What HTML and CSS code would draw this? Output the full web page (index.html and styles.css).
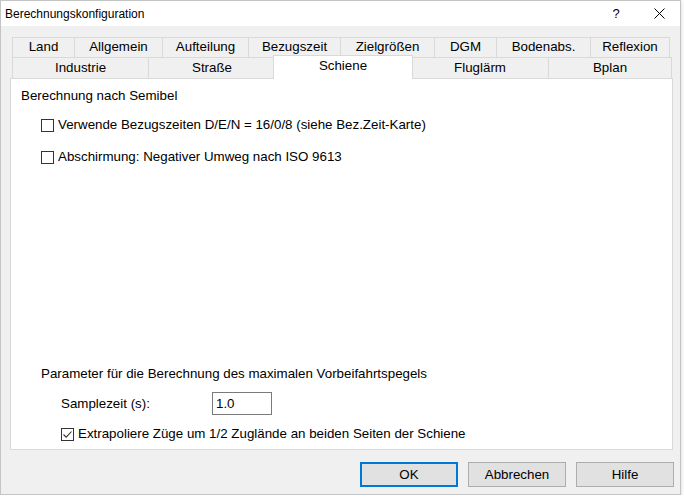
FILE: index.html
```html
<!DOCTYPE html>
<html>
<head>
  <title>Berechnungskonfiguration</title>
  <link rel="stylesheet" href="styles.css">
</head>
<body>
  <div class="dialog">
    <div class="titlebar">
      <span class="title">Berechnungskonfiguration</span>
      <span class="caption-btn help">?</span>
      <span class="caption-btn close">
        <svg width="11" height="11" viewBox="0 0 11 11"><path d="M0.5 0.5L10.5 10.5M10.5 0.5L0.5 10.5" stroke="#000" stroke-width="1" fill="none"/></svg>
      </span>
    </div>

    <div class="main">
      <!-- back row of tabs -->
      <div class="tab-row back">
        <div class="tab" style="width:62px">Land</div>
        <div class="tab" style="width:88px">Allgemein</div>
        <div class="tab" style="width:86px">Aufteilung</div>
        <div class="tab" style="width:92px">Bezugszeit</div>
        <div class="tab" style="width:94px">Zielgrößen</div>
        <div class="tab" style="width:62px">DGM</div>
        <div class="tab" style="width:94px">Bodenabs.</div>
        <div class="tab last" style="width:80px">Reflexion</div>
      </div>
      <!-- front row, holds the active tab -->
      <div class="tab-row front">
        <div class="tab" style="width:136px">Industrie</div>
        <div class="tab" style="width:127px">Straße</div>
        <div class="tab active" style="width:136px">Schiene</div>
        <div class="tab" style="width:137px">Fluglärm</div>
        <div class="tab last" style="width:124px">Bplan</div>
      </div>

      <div class="panel">
        <div class="group-title">Berechnung nach Semibel</div>
        <div class="options">
          <label class="check-row">
            <span class="checkbox"></span>
            <span>Verwende Bezugszeiten D/E/N = 16/0/8 (siehe Bez.Zeit-Karte)</span>
          </label>
          <label class="check-row">
            <span class="checkbox"></span>
            <span>Abschirmung: Negativer Umweg nach ISO 9613</span>
          </label>
        </div>

        <div class="params">
          <div class="params-title">Parameter für die Berechnung des maximalen Vorbeifahrtspegels</div>
          <div class="field-row">
            <span class="field-label">Samplezeit (s):</span>
            <input class="field-input" type="text" value="1.0">
          </div>
          <label class="check-row">
            <span class="checkbox checked">
              <svg width="11" height="11" viewBox="0 0 11 11"><path d="M1.5 5.5L4.2 8.2L9.5 2.5" stroke="#333" stroke-width="1.1" fill="none"/></svg>
            </span>
            <span>Extrapoliere Züge um 1/2 Zuglände an beiden Seiten der Schiene</span>
          </label>
        </div>
      </div>

      <div class="buttons">
        <button class="btn default">OK</button>
        <button class="btn">Abbrechen</button>
        <button class="btn">Hilfe</button>
      </div>
    </div>
  </div>
</body>
</html>
```

FILE: styles.css
```css
:root {
  --face: #f0f0f0;
  --tab-border: #d9d9d9;
  --text: #000000;
  --accent: #0078d7;
}

body {
  margin: 0;
  background: #ffffff;
  font-family: "Liberation Sans", Arial, sans-serif;
  font-size: 13.33px;
  color: var(--text);
}

.dialog {
  width: 681px;
  height: 495px;
  box-sizing: border-box;
  border: 1px solid #c4c4c4;
  background: var(--face);
  display: flex;
  flex-direction: column;
  box-shadow: 1px 1px 3px rgba(0, 0, 0, 0.12);
}

/* Title bar */
.titlebar {
  height: 25px;
  background: #ffffff;
  display: flex;
  align-items: center;
  padding-left: 4px;
  font-size: 12px;
}

.title {
  flex: 1;
}

.caption-btn {
  height: 25px;
  display: flex;
  align-items: center;
  justify-content: center;
}

.help {
  width: 44px;
  font-size: 13px;
}

.close {
  width: 42px;
}

/* Tabs */
.main {
  flex: 1;
  padding: 11px 6px 0 9px;
  display: flex;
  flex-direction: column;
}

.tab-row {
  display: flex;
  margin-left: 2px;
}

.tab {
  box-sizing: border-box;
  border-top: 1px solid var(--tab-border);
  border-left: 1px solid var(--tab-border);
  background: var(--face);
  text-align: center;
  line-height: 16px;
  white-space: nowrap;
}

.tab.last {
  border-right: 1px solid var(--tab-border);
}

.back .tab {
  height: 20px;
  padding-top: 1px;
}

.front {
  height: 21px;
}

.front .tab {
  height: 21px;
  padding-top: 2px;
}

.front .tab.active {
  position: relative;
  z-index: 1;
  height: 24px;
  margin: -2px -2px 0 -2px;
  width: 140px !important;
  flex: none;
  padding-top: 2px;
  background: #ffffff;
  border-right: 1px solid var(--tab-border);
}

/* Page content */
.panel {
  width: 663px;
  height: 372px;
  box-sizing: border-box;
  background: #ffffff;
  border: 1px solid var(--tab-border);
  padding: 9px 10px 7px 10px;
  display: flex;
  flex-direction: column;
  line-height: 16px;
}

.options {
  padding-left: 20px;
  margin-top: 13px;
  display: flex;
  flex-direction: column;
  gap: 16px;
}

.check-row {
  display: flex;
  align-items: center;
  gap: 4px;
  height: 16px;
}

.checkbox {
  width: 13px;
  height: 13px;
  box-sizing: border-box;
  border: 1px solid #333333;
  background: #ffffff;
  display: flex;
  align-items: center;
  justify-content: center;
  flex: none;
}

.params {
  margin-top: auto;
  padding-left: 20px;
}

.field-row,
.params .check-row {
  padding-left: 20px;
}

.field-row {
  display: flex;
  align-items: center;
  margin-top: 10px;
  height: 23px;
}

.field-label {
  width: 151px;
}

.field-input {
  width: 60px;
  height: 23px;
  box-sizing: border-box;
  border: 1px solid #7a7a7a;
  padding: 0 3px;
  margin: 0;
  font-family: inherit;
  font-size: 13.33px;
  color: var(--text);
  outline: none;
}

.params .check-row {
  margin-top: 11px;
}

/* Dialog buttons */
.buttons {
  display: flex;
  justify-content: flex-end;
  gap: 10px;
  margin-top: 12px;
}

.btn {
  width: 98px;
  height: 25px;
  box-sizing: border-box;
  background: #e1e1e1;
  border: 1px solid #adadad;
  font-family: inherit;
  font-size: 13.33px;
  color: var(--text);
  padding: 0;
}

.btn.default {
  border: 2px solid var(--accent);
}
```
